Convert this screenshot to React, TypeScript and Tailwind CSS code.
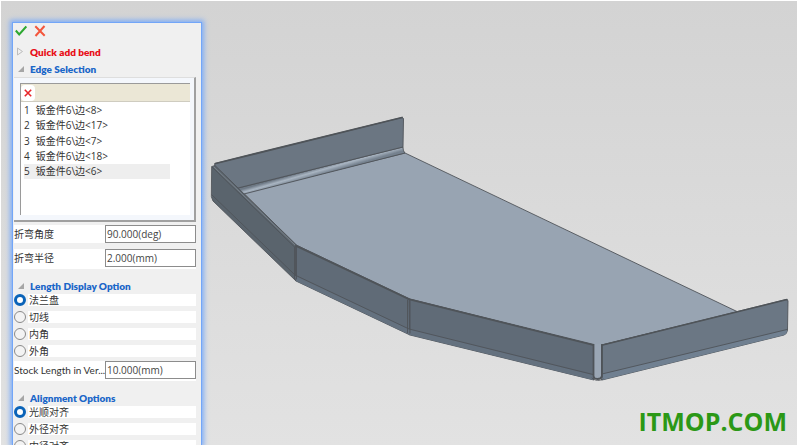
import React from 'react';

interface OptionGroupProps {
    name: string;
    options: string[];
    selected: string;
    onSelect: (value: string) => void;
}

interface FieldProps {
    id: string;
    label: string;
    defaultValue: string;
}

const EDGES = ['钣金件6\\边<8>', '钣金件6\\边<17>', '钣金件6\\边<7>', '钣金件6\\边<18>', '钣金件6\\边<6>'];
const LENGTH_OPTIONS = ['法兰盘', '切线', '内角', '外角'];
const ALIGNMENT_OPTIONS = ['光顺对齐', '外径对齐', '内径对齐'];

const SectionTitle: React.FC<{ title: string }> = ({ title }) => (
    <h2 className="flex h-[17px] items-center gap-1.5 pl-1 font-['Lato',sans-serif] text-[10px] font-extrabold text-[#1a66c8]">
        <svg className="h-1.5 w-1.5 shrink-0" viewBox="0 0 6 6" aria-hidden="true">
            <path d="M6 0V6H0Z" fill="#a6a6a6" />
        </svg>
        {title}
    </h2>
);

const Field: React.FC<FieldProps> = ({ id, label, defaultValue }) => (
    <div className="flex items-center bg-white">
        <label htmlFor={id} className="min-w-0 flex-1 whitespace-nowrap font-['Lato','Noto_Sans_CJK_SC',sans-serif]">{label}</label>
        <input
            id={id}
            type="text"
            defaultValue={defaultValue}
            className="h-[18px] w-[91px] shrink-0 border border-[#8c8c8c] bg-white px-px text-[10px] text-[#444] outline-none"
        />
    </div>
);

const OptionGroup: React.FC<OptionGroupProps> = ({ name, options, selected, onSelect }) => (
    <div role="radiogroup" aria-label={name} className="flex flex-col gap-[5px]">
        {options.map(option => (
            <label key={option} className="flex h-3 items-center">
                <input
                    type="radio"
                    name={name}
                    checked={option === selected}
                    onChange={() => onSelect(option)}
                    className="h-3 w-3 shrink-0 appearance-none rounded-full border border-[#8a8a8a] bg-[#f3f3f3] checked:border-[3px] checked:border-[#0a63b8] checked:bg-white"
                />
                <span className="ml-0.5 flex h-3 flex-1 items-center bg-white pl-px">{option}</span>
            </label>
        ))}
    </div>
);

const SheetMetalModel: React.FC = () => (
    <svg className="block h-full w-full" viewBox="202 1 595 444" preserveAspectRatio="xMinYMin meet" role="img" aria-label="Sheet metal part">
        <defs>
            <linearGradient id="fillet" gradientUnits="userSpaceOnUse" x1="320" y1="167" x2="322" y2="174">
                <stop offset="0" stopColor="#6e7985" />
                <stop offset="0.45" stopColor="#a9b5c2" />
                <stop offset="1" stopColor="#75818e" />
            </linearGradient>
        </defs>
        <g strokeLinejoin="round" strokeLinecap="round" stroke="#4f5459" strokeWidth="0.900">
            {/* base plate */}
            <path d="M244 193L405 153L738 312L602 345L601 376H594L593 345L410 299L296 245Z" fill="#98a4b2" />
            {/* back flange with its bend */}
            <path d="M238 188L403 147C403 150 404 152 405 153L244 194Z" fill="url(#fillet)" />
            <path d="M215 163.500L402 117.500L403.500 118.500L403 147L238 188L215 166Z" fill="#6b7682" />
            <path d="M215.500 163.500L402 117.500" strokeWidth="1.800" />
            {/* left flange */}
            <path d="M212 166.500L215 165.500L296.500 245L296 281L213 201L211.500 197Z" fill="#5a646d" />
            <path d="M214 167L296 246" stroke="#7d858c" />
            <path d="M212 167L294.500 247" />
            <path d="M212 195L295 275" />
            {/* middle flanges */}
            <path d="M296 245L409.500 299L410 335L296 281Z" fill="#606b77" />
            <path d="M409.500 299L594 344.500V380L410 335Z" fill="#606b77" />
            <path d="M295 276L409 329L410 335L296 281Z" fill="#64717f" stroke="none" />
            <path d="M409 329L593 375V380L410 335Z" fill="#64717f" stroke="none" />
            <path d="M296 275.500L409 329L593 374.500" fill="none" />
            <path d="M296 246L409.500 299.500L593 345" fill="none" strokeWidth="1.500" />
            <path d="M294.500 247V279M296.500 247V279" />
            <path d="M407.500 300V333M410 300V333" />
            {/* corner relief */}
            <path d="M593.500 345V376C594 380 601 380 602 376V345" fill="#9aa6b4" strokeWidth="1.800" />
            <path d="M595.500 344V374C596 377 600 377 600.500 374V344" fill="#9aa6b4" stroke="none" />
            {/* right flange */}
            <path d="M602 345L786 299.500L788 300.500L787.500 330Q787 334 784 335L602 380Z" fill="#6b7784" />
            <path d="M602 374L787 329.500Q787 334 784 335L602 380Z" fill="#708091" stroke="none" />
            <path d="M602.500 345L787 299.500" strokeWidth="1.500" />
            <path d="M602 374L787 329.500" />
            <path d="M602 345V377" strokeWidth="1.800" />
            <path d="M592 378C595 381 600 381 603 379" fill="none" />
        </g>
    </svg>
);

export default function App() {
    const [lengthOption, setLengthOption] = React.useState('法兰盘');
    const [alignment, setAlignment] = React.useState('光顺对齐');
    const [activeEdge, setActiveEdge] = React.useState(4);

    return (
        <div className="flex h-screen overflow-hidden border-l border-t border-white bg-linear-to-b from-[#d3d3d3] to-[#e2e2e2] font-['Open_Sans','Noto_Sans_CJK_SC',sans-serif] text-[10px] leading-3 text-[#333]">
            <aside className="relative z-10 ml-[11px] mt-[21px] flex w-[190px] shrink-0 flex-col border border-b-0 border-[#72a6f8] bg-[#f0f0f0] pl-px pr-[5px] pt-px shadow-[0_0_5px_2px_#7fadf7]">
                <div className="flex h-3.5 shrink-0 items-center gap-[7px] pl-px">
                    <button type="button" aria-label="OK">
                        <svg className="h-3 w-3" viewBox="0 0 12 12" fill="none" stroke="#2da831" strokeWidth="2">
                            <path d="M0.800 5.500L4.200 9.500L11.300 1.500" />
                        </svg>
                    </button>
                    <button type="button" aria-label="Cancel">
                        <svg className="h-3 w-3" viewBox="0 0 12 12" fill="none" stroke="#f3563c" strokeWidth="2">
                            <path d="M1.300 1.300L10.700 10.700M10.500 1L1.500 11" />
                        </svg>
                    </button>
                </div>
                <button type="button" className="mt-[5px] flex h-[17px] shrink-0 items-center gap-1.5 pl-1 text-left font-['Lato',sans-serif] font-extrabold text-[#e80f18]">
                    <svg className="h-1.5 w-1.5 shrink-0 overflow-visible" viewBox="0 0 6 6" fill="none" stroke="#bdbdbd" aria-hidden="true">
                        <path d="M-0.500 -1L4.500 2.500L-0.500 6Z" />
                    </svg>
                    Quick add bend
                </button>
                <div className="shrink-0">
                    <SectionTitle title="Edge Selection" />
                </div>

                <div className="shrink-0 border-b-2 border-r-2 border-t border-b-[#a0a0a0] border-r-[#a0a0a0] border-t-[#dedede] bg-[#f4f7fc] px-1 py-[5px] pl-1.5">
                    <div className="h-[132px] border-l border-t border-[#9a9a9a] bg-white">
                        <div className="flex h-[18px] items-center border-b border-[#cfccc0] bg-[#ebe7d6]">
                            <button type="button" aria-label="Remove edges" className="flex h-4 w-3.5 items-center justify-center rounded-sm bg-white">
                                <svg className="h-2 w-2" viewBox="0 0 8 8" fill="none" stroke="#e8262a" strokeWidth="1.600">
                                    <path d="M0.800 0.800L7.200 7.200M7.200 0.800L0.800 7.200" />
                                </svg>
                            </button>
                        </div>
                        <ol className="flex h-[77px] flex-col pl-[3px] pr-5">
                            {EDGES.map((edge, index) => (
                                <li key={edge} className="flex flex-1">
                                    <button
                                        type="button"
                                        onClick={() => setActiveEdge(index)}
                                        className={`flex flex-1 items-center gap-1.5 text-left ${index === activeEdge ? 'bg-[#eeeeee]' : ''}`}
                                    >
                                        <span>{index + 1}</span>
                                        <span>{edge}</span>
                                    </button>
                                </li>
                            ))}
                        </ol>
                    </div>
                </div>

                <div className="mt-[3px] flex shrink-0 flex-col gap-1.5 border-b-2 border-white">
                    <Field id="bend-angle" label="折弯角度" defaultValue="90.000(deg)" />
                    <Field id="bend-radius" label="折弯半径" defaultValue="2.000(mm)" />
                </div>

                <div className="mt-2 shrink-0">
                    <SectionTitle title="Length Display Option" />
                    <OptionGroup name="Length Display Option" options={LENGTH_OPTIONS} selected={lengthOption} onSelect={setLengthOption} />
                    <div className="mt-1 border-b-2 border-white">
                        <Field id="stock-length" label="Stock Length in Ver..." defaultValue="10.000(mm)" />
                    </div>
                </div>

                <div className="mt-2 shrink-0">
                    <SectionTitle title="Alignment Options" />
                    <OptionGroup name="Alignment Options" options={ALIGNMENT_OPTIONS} selected={alignment} onSelect={setAlignment} />
                </div>
            </aside>

            <main className="relative min-w-0 flex-1">
                <SheetMetalModel />
                <p className="absolute bottom-2.5 right-2.5 font-['Open_Sans',sans-serif] text-[25px] font-bold leading-7 text-[#2b9816]">ITMOP.COM</p>
            </main>
        </div>
    );
}
